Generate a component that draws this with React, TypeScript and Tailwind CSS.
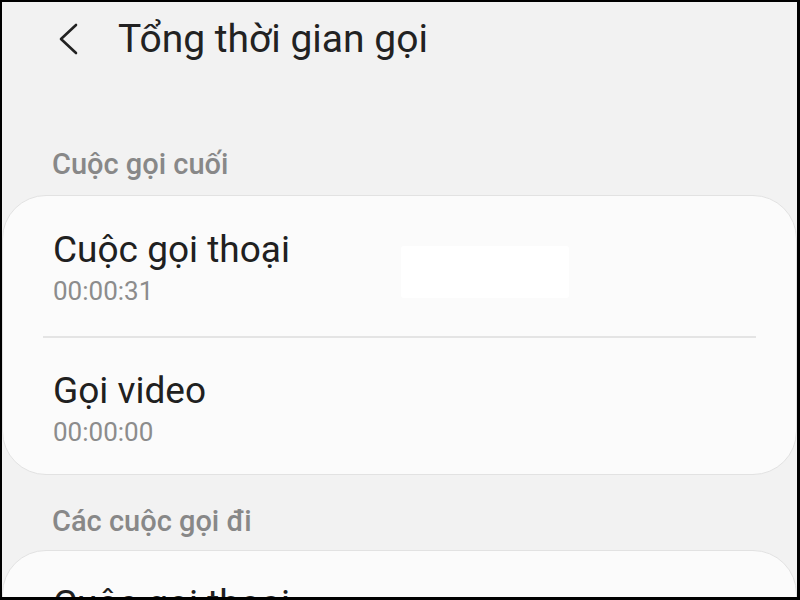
import React from "react";

type Row = { title: string; value: string };

const lastCalls: Row[] = [
    { title: "Cuộc gọi thoại", value: "00:00:31" },
    { title: "Gọi video", value: "00:00:00" },
];

function ChevronLeft() {
    return (
        <svg width="24" height="32" viewBox="0 0 24 32" fill="none" className="shrink-0">
            <path d="M20 2 L5 16 L20 30" stroke="#222" strokeWidth="2.6" strokeLinecap="round" strokeLinejoin="round" />
        </svg>
    );
}

function SectionLabel({ children }: { children: React.ReactNode }) {
    return <div className="pl-[50px] text-[29px] leading-[36px] font-medium text-[#888]">{children}</div>;
}

function CallRow({ row, className, redacted }: { row: Row; className?: string; redacted?: boolean }) {
    return (
        <div className={"relative pl-[50px] " + (className ?? "")}>
            <div className="text-[37px] leading-[44px] text-[#202020]">{row.title}</div>
            <div className="mt-[2px] text-[26px] leading-[34px] text-[#8c8c8c]">{row.value}</div>
            {/* white box covering something in the original shot */}
            {redacted && <div className="absolute left-[398px] top-[50px] w-[168px] h-[52px] rounded-[3px] bg-white" />}
        </div>
    );
}

export default function App() {
    return (
        <div
            className="w-[800px] h-[600px] overflow-hidden border-t-2 border-l-2 border-r-[3px] border-b-[3px] border-black bg-[#f2f2f2]"
            style={{ fontFamily: "Roboto, 'Noto Sans', sans-serif" }}
        >
            <div className="flex items-center h-[74px] pl-[54px] gap-[38px]">
                <ChevronLeft />
                <div className="text-[39px] leading-[48px] text-[#222]">Tổng thời gian gọi</div>
            </div>

            <div className="pt-[70px] pb-[13px]">
                <SectionLabel>Cuộc gọi cuối</SectionLabel>
            </div>

            <div className="rounded-[44px] bg-[#fbfbfb] border border-[#e2e2e2]">
                <CallRow row={lastCalls[0]} className="h-[140px] pt-[32px]" redacted />
                <div className="mx-[40px] h-[2px] bg-[#e4e4e4]" />
                <CallRow row={lastCalls[1]} className="h-[136px] pt-[31px]" />
            </div>

            <div className="pt-[28px] pb-[11px]">
                <SectionLabel>Các cuộc gọi đi</SectionLabel>
            </div>

            <div className="rounded-t-[44px] bg-[#fbfbfb] border border-[#e2e2e2] h-[200px]">
                <div className="pl-[50px] pt-[31px] text-[37px] leading-[44px] text-[#202020]">Cuộc gọi thoại</div>
            </div>
        </div>
    );
}
